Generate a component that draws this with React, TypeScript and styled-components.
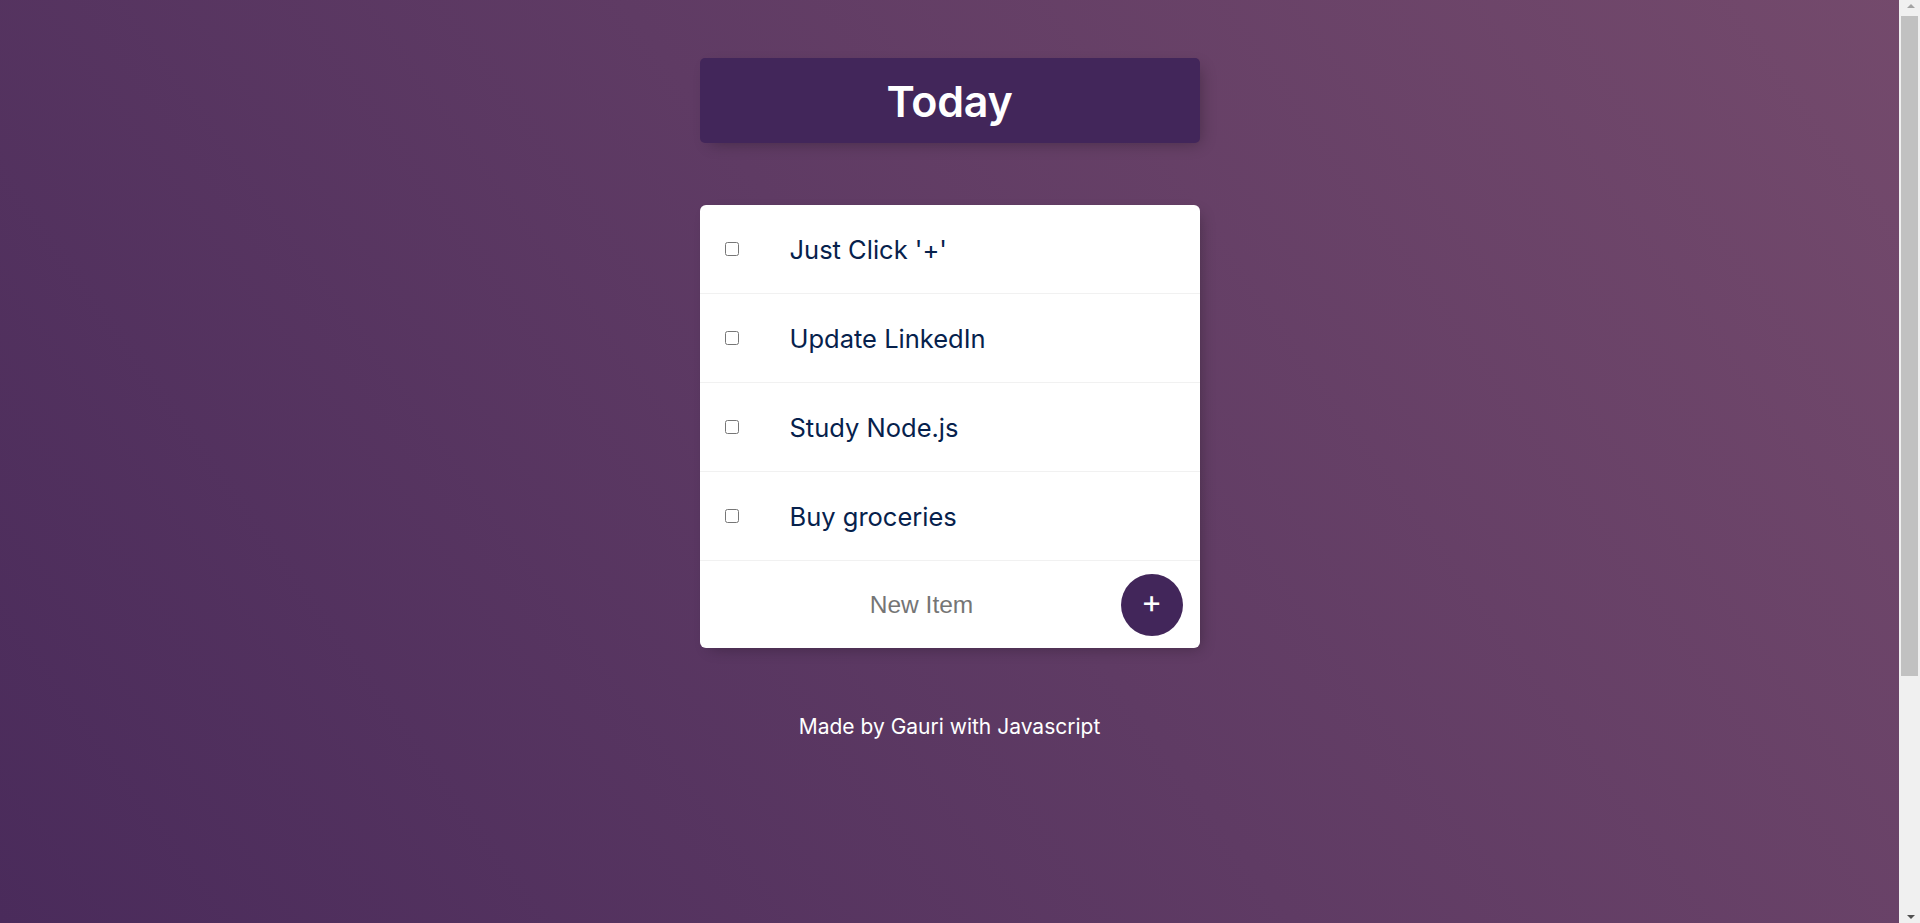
import React from 'react'
import styled, { createGlobalStyle } from 'styled-components'

const items = ["Just Click '+'", 'Update LinkedIn', 'Study Node.js', 'Buy groceries']

const GlobalStyle = createGlobalStyle`
  html {
    background: linear-gradient(54deg, #4a2b5b 0%, #5f3b64 50%, #744a6c 100%);
    background-attachment: fixed;
  }
  body {
    margin: 0;
    font-family: Inter, "Noto Sans", sans-serif;
  }
`

const App = (): React.ReactElement => (
  <>
    <GlobalStyle />
    <Page>
      <Heading>
        <HeadingText>Today</HeadingText>
      </Heading>
      <Card>
        {items.map((item) => (
          <Row key={item}>
            <Check type="checkbox" />
            <ItemText>{item}</ItemText>
          </Row>
        ))}
        <Footer>
          <NewItem type="text" placeholder="New Item" />
          <AddButton type="button">+</AddButton>
        </Footer>
      </Card>
      <Credit>Made by Gauri with Javascript</Credit>
    </Page>
    {/* window scrollbar, as in the screenshot */}
    <ScrollBar aria-hidden>
      <Arrow $dir="up" />
      <Track>
        <Thumb />
      </Track>
      <Arrow $dir="down" />
    </ScrollBar>
  </>
)

export default App

const Page = styled.div`
  display: flex;
  flex-direction: column;
  align-items: center;
  padding: 58px 21px 0 0;
  min-height: 1250px;
  box-sizing: border-box;
`
const Heading = styled.div`
  width: 500px;
  height: 85px;
  display: flex;
  align-items: center;
  justify-content: center;
  background-color: #42265a;
  border-radius: 5px;
  box-shadow: 5px 5px 15px -5px rgba(0, 0, 0, 0.3);
`
const HeadingText = styled.h1`
  margin: 0;
  color: #fff;
  font-size: 43px;
  font-weight: 600;
  letter-spacing: -0.3px;
`
const Card = styled.div`
  width: 500px;
  margin-top: 62px;
  background-color: #fff;
  border-radius: 6px;
  box-shadow: 5px 5px 15px -5px rgba(0, 0, 0, 0.3);
  overflow: hidden;
`
const Row = styled.div`
  display: flex;
  align-items: center;
  height: 88px;
  border-bottom: 1px solid #f1f1f1;
`
const Check = styled.input`
  width: 14px;
  height: 14px;
  margin: 0 0 0 25px;
`
const ItemText = styled.p`
  margin: 0 0 0 51px;
  color: #06214c;
  font-size: 25.5px;
  font-weight: 400;
`
const Footer = styled.div`
  display: flex;
  align-items: center;
  height: 87px;
  padding: 0 17px 0 44px;
`
const NewItem = styled.input`
  flex: 1;
  min-width: 0;
  margin-right: 21px;
  height: 60px;
  border: none;
  outline: none;
  text-align: center;
  font-family: "Liberation Sans", Arial, sans-serif;
  font-size: 24.5px;
  color: #333;
  background: transparent;
  &::placeholder {
    color: #757575;
  }
`
const AddButton = styled.button`
  width: 62px;
  height: 62px;
  flex-shrink: 0;
  border: none;
  border-radius: 50%;
  background-color: #42265a;
  color: #fff;
  font-family: Inter, sans-serif;
  font-size: 32px;
  font-weight: 400;
  line-height: 1;
  padding: 0 0 6px;
  cursor: pointer;
`
const Credit = styled.p`
  margin: 66px 0 0;
  color: #fff;
  font-size: 21px;
`
const ScrollBar = styled.div`
  position: fixed;
  top: 0;
  right: 0;
  bottom: 0;
  width: 21px;
  display: flex;
  flex-direction: column;
  background-color: #f0f0f0;
`
const Arrow = styled.div<{ $dir: 'up' | 'down' }>`
  height: 16px;
  display: flex;
  justify-content: center;
  align-items: ${({ $dir }) => ($dir === 'up' ? 'flex-start' : 'flex-end')};
  padding: 4px 0;
  box-sizing: border-box;
  &::before {
    content: '';
    width: 0;
    height: 0;
    margin-left: 2px;
    border-left: 4px solid transparent;
    border-right: 4px solid transparent;
    ${({ $dir }) =>
      $dir === 'up'
        ? 'border-bottom: 4px solid #a3a3a3;'
        : 'border-top: 4px solid #505050;'}
  }
`
const Track = styled.div`
  flex: 1;
  padding: 0 2px 0 2px;
`
const Thumb = styled.div`
  height: 660px;
  background-color: #c1c1c1;
`
